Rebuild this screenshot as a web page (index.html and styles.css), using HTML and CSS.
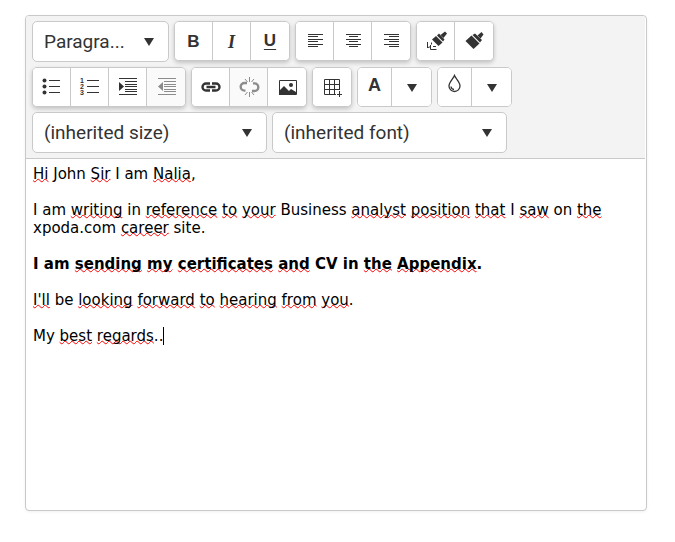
FILE: index.html
```html
<!DOCTYPE html>
<html lang="en">
<head>
    <meta charset="UTF-8">
    <meta name="viewport" content="width=device-width, initial-scale=1.0">
    <title>Message editor</title>
    <link rel="stylesheet" href="styles.css">
</head>
<body>
    <div class="editor">
        <div class="toolbar" role="toolbar" aria-label="Formatting">
            <div class="dropdown dropdown-format">
                <select aria-label="Format">
                    <option>Paragra...</option>
                </select>
            </div>

            <div class="btn-group">
                <button type="button" class="letter bold" aria-label="Bold">B</button>
                <button type="button" class="letter italic" aria-label="Italic">I</button>
                <button type="button" class="letter underline" aria-label="Underline">U</button>
            </div>

            <div class="btn-group">
                <button type="button" aria-label="Align left">
                    <svg class="icon" viewBox="0 0 21 20"><path class="line" d="M4 3.5h15M4 5.5h10M4 8.5h15M4 10.5h10M4 13.5h15M4 15.5h10"/></svg>
                </button>
                <button type="button" aria-label="Align center">
                    <svg class="icon" viewBox="0 0 21 20"><path class="line" d="M4 3.5h15M7 5.5h9M4 8.5h15M7 10.5h9M4 13.5h15M7 15.5h9"/></svg>
                </button>
                <button type="button" aria-label="Align right">
                    <svg class="icon" viewBox="0 0 21 20"><path class="line" d="M4 3.5h15M9 5.5h10M4 8.5h15M9 10.5h10M4 13.5h15M9 15.5h10"/></svg>
                </button>
            </div>

            <div class="btn-group">
                <button type="button" aria-label="Copy format">
                    <svg class="icon" viewBox="0 0 21 20">
                        <path d="M7 8.500L11 5 17.500 11.500 13.500 15z"/>
                        <path d="M12 4.500L14 2.500 19.500 8.500 18 10.500z"/>
                        <path d="M15.500 4L20 .5 22 2.500 18.500 7z"/>
                        <path class="line" d="M2.500 11v6M3 16.500l3-1M5.500 14v4.500h6M6.500 11.500v2M8 15.500h3"/>
                    </svg>
                </button>
                <button type="button" aria-label="Apply format">
                    <svg class="icon" viewBox="0 0 21 20">
                        <path d="M2.500 10L8.500 4.500 16.500 12.500 10.500 18z"/>
                        <path d="M9.500 4L12 2.500 19 9 17 11.500z"/>
                        <path d="M14.500 4.500L18.500 1 20.500 3.500 17.500 7.500z"/>
                    </svg>
                </button>
            </div>

            <div class="btn-group">
                <button type="button" aria-label="Bulleted list">
                    <svg class="icon" viewBox="0 0 21 20">
                        <circle cx="3.500" cy="3.500" r="2"/><circle cx="3.500" cy="9.500" r="2"/><circle cx="3.500" cy="15.500" r="2"/>
                        <path class="line" d="M8 3.500h11M8 9.500h11M8 15.500h11"/>
                    </svg>
                </button>
                <button type="button" aria-label="Numbered list">
                    <svg class="icon" viewBox="0 0 21 20">
                        <text x="1" y="6">1</text><text x="1" y="12">2</text><text x="1" y="18">3</text>
                        <path class="line" d="M8 3.500h12M8 9.500h12M8 15.500h12"/>
                    </svg>
                </button>
                <button type="button" aria-label="Indent">
                    <svg class="icon" viewBox="0 0 21 20">
                        <path d="M2 5l5 4.500-5 4.500z"/>
                        <path class="line" d="M2 1.500h18M8 4.500h12M8 7.500h12M8 9.500h12M8 12.500h12M8 14.500h12M2 17.500h18"/>
                    </svg>
                </button>
                <button type="button" aria-label="Outdent" disabled>
                    <svg class="icon" viewBox="0 0 21 20">
                        <path d="M8 5L3 9.500 8 14z"/>
                        <path class="line" d="M3 1.500h18M9 4.500h12M9 7.500h12M9 9.500h12M9 12.500h12M9 14.500h12M3 17.500h18"/>
                    </svg>
                </button>
            </div>

            <div class="btn-group">
                <button type="button" aria-label="Insert link">
                    <svg class="icon" viewBox="1 2 21 20"><path class="chain" d="M11 8.500H7a3.500 3.500 0 0 0 0 7h4M13 8.500h4a3.500 3.500 0 0 1 0 7h-4M7.500 12h9"/></svg>
                </button>
                <button type="button" aria-label="Remove link" disabled>
                    <svg class="icon" viewBox="1 2 21 20">
                        <path class="chain" d="M10 8H7.500a3.800 3.800 0 0 0 0 7.600h1M16 8.400h1.500a3.800 3.800 0 0 1 0 7.600H15"/>
                        <path class="ray" d="M12.500 2v5M12.500 17v5M8 4l2.500 3M17 4l-2.500 3M8 20l2.500-3M17 20l-2.500-3"/>
                    </svg>
                </button>
                <button type="button" aria-label="Insert image">
                    <svg class="icon" viewBox="0 0 21 20">
                        <path class="line" d="M3.500 3.500h17v14h-17z"/>
                        <circle cx="15" cy="8" r="2"/>
                        <path d="M3 14l5-5 5 5 2-2 5 3v3H3z"/>
                    </svg>
                </button>
            </div>

            <div class="btn-group">
                <button type="button" aria-label="Insert table">
                    <svg class="icon" viewBox="0 0 21 20"><path class="line" d="M15 17.500H3.500v-15h15V13M3 7.500h16M3 12.500h16M8.500 2v16M13.500 2v16M18.500 14v6M16 17.500h5"/></svg>
                </button>
            </div>

            <div class="btn-group color-group">
                <button type="button" class="letter color" aria-label="Text color">A</button>
                <button type="button" class="arrow" aria-label="Choose text color"></button>
            </div>

            <div class="btn-group color-group">
                <button type="button" class="color" aria-label="Background color">
                    <svg class="icon" viewBox="0 0 21 20">
                        <path class="drop" d="M10.500 2.500C9 6 5 9 5 13a5.500 5.500 0 0 0 11 0c0-4-4-7-5.500-10.500z"/>
                        <path class="drop" d="M7 13.500a3.500 3.500 0 0 0 3 3"/>
                    </svg>
                </button>
                <button type="button" class="arrow" aria-label="Choose background color"></button>
            </div>

            <div class="dropdown dropdown-font">
                <select aria-label="Font size">
                    <option>(inherited size)</option>
                </select>
            </div>
            <div class="dropdown dropdown-font">
                <select aria-label="Font name">
                    <option>(inherited font)</option>
                </select>
            </div>
        </div>

        <div class="content" contenteditable="true" spellcheck="false" role="textbox" aria-multiline="true" aria-label="Message">
            <p><u>Hi</u> John <u>Sir</u> I am <u>Nalia</u>,</p>
            <p>I am <u>writing</u> in <u>reference</u> <u>to</u> <u>your</u> Business <u>analyst</u> <u>position</u> <u>that</u> I <u>saw</u> on <u>the</u> xpoda.com <u>career</u> site.</p>
            <p><strong>I am <u>sending</u> <u>my</u> <u>certificates</u> <u>and</u> CV in <u>the</u> <u>Appendix</u>.</strong></p>
            <p><u>I'll</u> be <u>looking</u> <u>forward</u> <u>to</u> <u>hearing</u> <u>from</u> <u>you</u>.</p>
            <p class="active-line">My <u>best</u> <u>regards</u>..</p>
        </div>
    </div>
</body>
</html>
```
FILE: styles.css
```css
* {
    box-sizing: border-box;
}

body {
    margin: 0;
    padding: 15px 28px 31px 25px;
    background: white;
    color: #333;
    font-family: Roboto, Arial, sans-serif;
}

.editor {
    border: 1px solid #c9c9c9;
    border-radius: 4px;
    background: white;
    box-shadow: 0 1px 3px rgba(0,0,0,0.06);
}

/* Toolbar */
.toolbar {
    display: flex;
    flex-wrap: wrap;
    align-items: flex-start;
    gap: 5px;
    margin-right: 1px;
    padding: 5px 6px;
    background: #f3f3f3;
    border-bottom: 1px solid #c9c9c9;
    border-radius: 3px 3px 0 0;
}

.btn-group {
    display: flex;
    height: 40px;
    background: white;
    border: 1px solid #c9c9c9;
    border-radius: 5px;
    overflow: hidden;
    box-shadow: 0 2px 4px rgba(0,0,0,0.2);
}

.btn-group button {
    display: flex;
    align-items: center;
    width: 38px;
    padding: 0 8px;
    background: white;
    border: none;
    border-right: 1px solid #c9c9c9;
    color: #333;
    cursor: pointer;
}

.btn-group button:last-child {
    border-right: none;
}

.btn-group button:disabled {
    background: #fafafa;
    color: #8c8c8c;
    cursor: default;
}

.btn-group .letter {
    justify-content: center;
    padding: 2px 0 0;
    font-family: "Liberation Sans", Arial, sans-serif;
    font-size: 17px;
    font-weight: bold;
}

.btn-group .italic {
    font-family: "Liberation Serif", "Times New Roman", serif;
    font-size: 18px;
    font-style: italic;
}

.btn-group .underline {
    padding: 0;
    text-decoration: underline;
    text-underline-offset: 3px;
}

.color-group {
    box-shadow: none;
}

.btn-group .color {
    width: 34px;
    padding: 0 6px 8px;
}

.btn-group .letter.color {
    font-size: 18px;
    padding: 0 0 4px;
}

.btn-group .arrow {
    justify-content: center;
    width: 39px;
    padding: 2px 0 0;
}

.arrow::before,
.dropdown::after {
    content: '';
    border: 5px solid transparent;
    border-top: 8px solid #333;
    border-bottom: none;
}

/* Icons */
.icon {
    flex: none;
    width: 21px;
    height: 20px;
    fill: currentColor;
    overflow: visible;
}

.icon text {
    font: bold 7px "Liberation Sans", Arial, sans-serif;
}

.icon .line,
.icon .chain,
.icon .ray,
.icon .drop {
    fill: none;
    stroke: currentColor;
}

.icon .chain {
    stroke-width: 2.4;
}

.icon .drop {
    stroke-width: 1.3;
}

/* Dropdowns */
.dropdown {
    position: relative;
    height: 41px;
}

.dropdown::after {
    position: absolute;
    top: 17px;
    right: 15px;
    pointer-events: none;
}

.dropdown select {
    appearance: none;
    width: 100%;
    height: 100%;
    padding: 0 38px 0 11px;
    background: white;
    border: 1px solid #c9c9c9;
    border-radius: 5px;
    color: #333;
    font-family: inherit;
    font-size: 19px;
}

.dropdown-format {
    width: 137px;
}

.dropdown-font {
    width: 235px;
}

/* Message */
.content {
    min-height: 351px;
    padding: 6px 7px;
    color: black;
    font-family: Verdana, "DejaVu Sans", sans-serif;
    font-size: 15px;
    line-height: 18px;
    outline: none;
}

.content p {
    margin: 0 0 18px;
}

.content u {
    text-decoration: underline wavy red 1px;
    text-decoration-skip-ink: none;
    text-underline-offset: -1px;
}

.active-line::after {
    content: '';
    display: inline-block;
    height: 18px;
    border-left: 1px solid black;
    vertical-align: top;
}
```
